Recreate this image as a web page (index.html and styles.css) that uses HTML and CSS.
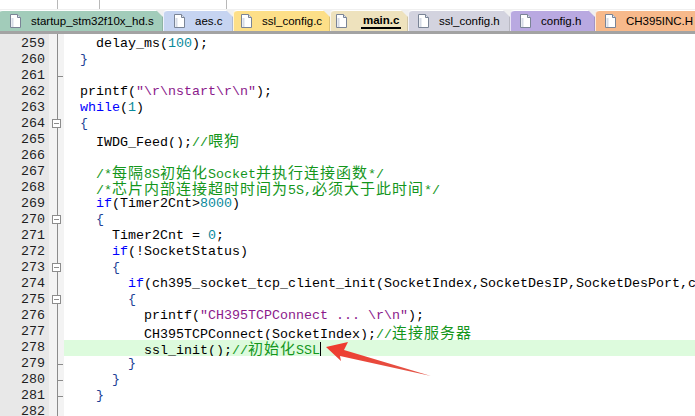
FILE: index.html
```html
<!DOCTYPE html>
<html lang="zh">

<head>
    <meta charset="UTF-8" />
    <title>main.c</title>
    <link rel="stylesheet" href="styles.css">
</head>

<body>
    <div class="ide">
        <div class="toolbar">
            <span class="sep s1"></span>
            <span class="sep s2"></span>
            <span class="sep s3"></span>
        </div>

        <div class="tabs">
            <div class="tab t-startup"><svg class="doc" viewBox="0 0 11 14"><path d="M0.5 0.5H7.5L10.5 3.5V13.5H0.5Z" fill="#fff" stroke="#7a8496"/><path d="M7.5 0.5V3.5H10.5" fill="#dde3ee" stroke="#7a8496"/><rect x="1.5" y="4" width="2" height="9" fill="#d6dbe6"/></svg><span>startup_stm32f10x_hd.s</span></div>
            <div class="tab t-aes"><svg class="doc" viewBox="0 0 11 14"><path d="M0.5 0.5H7.5L10.5 3.5V13.5H0.5Z" fill="#fff" stroke="#7a8496"/><path d="M7.5 0.5V3.5H10.5" fill="#dde3ee" stroke="#7a8496"/><rect x="1.5" y="4" width="2" height="9" fill="#d6dbe6"/></svg><span>aes.c</span></div>
            <div class="tab t-sslc"><svg class="doc" viewBox="0 0 11 14"><path d="M0.5 0.5H7.5L10.5 3.5V13.5H0.5Z" fill="#fff" stroke="#7a8496"/><path d="M7.5 0.5V3.5H10.5" fill="#dde3ee" stroke="#7a8496"/><rect x="1.5" y="4" width="2" height="9" fill="#d6dbe6"/></svg><span>ssl_config.c</span></div>
            <div class="tab t-main aktiv"><svg class="doc" viewBox="0 0 11 14"><path d="M0.5 0.5H7.5L10.5 3.5V13.5H0.5Z" fill="#fff" stroke="#7a8496"/><path d="M7.5 0.5V3.5H10.5" fill="#dde3ee" stroke="#7a8496"/><rect x="1.5" y="4" width="2" height="9" fill="#d6dbe6"/></svg><span>main.c</span></div>
            <div class="tab t-sslh"><svg class="doc" viewBox="0 0 11 14"><path d="M0.5 0.5H7.5L10.5 3.5V13.5H0.5Z" fill="#fff" stroke="#7a8496"/><path d="M7.5 0.5V3.5H10.5" fill="#dde3ee" stroke="#7a8496"/><rect x="1.5" y="4" width="2" height="9" fill="#d6dbe6"/></svg><span>ssl_config.h</span></div>
            <div class="tab t-config"><svg class="doc" viewBox="0 0 11 14"><path d="M0.5 0.5H7.5L10.5 3.5V13.5H0.5Z" fill="#fff" stroke="#7a8496"/><path d="M7.5 0.5V3.5H10.5" fill="#dde3ee" stroke="#7a8496"/><rect x="1.5" y="4" width="2" height="9" fill="#d6dbe6"/></svg><span>config.h</span></div>
            <div class="tab t-ch395"><svg class="doc" viewBox="0 0 11 14"><path d="M0.5 0.5H7.5L10.5 3.5V13.5H0.5Z" fill="#fff" stroke="#7a8496"/><path d="M7.5 0.5V3.5H10.5" fill="#dde3ee" stroke="#7a8496"/><rect x="1.5" y="4" width="2" height="9" fill="#d6dbe6"/></svg><span>CH395INC.H</span></div>
        </div>

        <div class="editor">
            <div class="sor"><span class="szam">259</span><span class="fold"></span><span class="kod">    delay_ms(<span class="num">100</span>);</span></div>
            <div class="sor"><span class="szam">260</span><span class="fold"></span><span class="kod">  <span class="br">}</span></span></div>
            <div class="sor"><span class="szam">261</span><span class="fold veg"></span><span class="kod"></span></div>
            <div class="sor"><span class="szam">262</span><span class="fold"></span><span class="kod">  printf(<span class="str">"\r\nstart\r\n"</span>);</span></div>
            <div class="sor"><span class="szam">263</span><span class="fold"></span><span class="kod">  <span class="kw">while</span>(<span class="num">1</span>)</span></div>
            <div class="sor"><span class="szam">264</span><span class="fold doboz"></span><span class="kod">  <span class="br">{</span></span></div>
            <div class="sor"><span class="szam">265</span><span class="fold"></span><span class="kod">    IWDG_Feed();<span class="cm">//<span class="c">喂狗</span></span></span></div>
            <div class="sor"><span class="szam">266</span><span class="fold"></span><span class="kod"></span></div>
            <div class="sor"><span class="szam">267</span><span class="fold"></span><span class="kod">    <span class="cm">/*<span class="c">每隔</span>8S<span class="c">初始化</span>Socket<span class="c">并执行连接函数</span>*/</span></span></div>
            <div class="sor"><span class="szam">268</span><span class="fold"></span><span class="kod">    <span class="cm">/*<span class="c">芯片内部连接超时时间为</span>5S,<span class="c">必须大于此时间</span>*/</span></span></div>
            <div class="sor"><span class="szam">269</span><span class="fold"></span><span class="kod">    <span class="kw">if</span>(Timer2Cnt&gt;<span class="num">8000</span>)</span></div>
            <div class="sor"><span class="szam">270</span><span class="fold doboz"></span><span class="kod">    <span class="br">{</span></span></div>
            <div class="sor"><span class="szam">271</span><span class="fold"></span><span class="kod">      Timer2Cnt = <span class="num">0</span>;</span></div>
            <div class="sor"><span class="szam">272</span><span class="fold"></span><span class="kod">      <span class="kw">if</span>(!SocketStatus)</span></div>
            <div class="sor"><span class="szam">273</span><span class="fold doboz"></span><span class="kod">      <span class="br">{</span></span></div>
            <div class="sor"><span class="szam">274</span><span class="fold"></span><span class="kod">        <span class="kw">if</span>(ch395_socket_tcp_client_init(SocketIndex,SocketDesIP,SocketDesPort,ch395_tcp_connect)==<span class="num">0</span>)</span></div>
            <div class="sor"><span class="szam">275</span><span class="fold doboz"></span><span class="kod">        <span class="br">{</span></span></div>
            <div class="sor"><span class="szam">276</span><span class="fold"></span><span class="kod">          printf(<span class="str">"CH395TCPConnect ... \r\n"</span>);</span></div>
            <div class="sor"><span class="szam">277</span><span class="fold"></span><span class="kod">          CH395TCPConnect(SocketIndex);<span class="cm">//<span class="c">连接服务器</span></span></span></div>
            <div class="sor aktivSor"><span class="szam">278</span><span class="fold"></span><span class="kod">          ssl_init();<span class="cm">//<span class="c">初始化</span>SSL</span><span class="kurzor"></span></span></div>
            <div class="sor"><span class="szam">279</span><span class="fold veg"></span><span class="kod">        <span class="br">}</span></span></div>
            <div class="sor"><span class="szam">280</span><span class="fold veg"></span><span class="kod">      <span class="br">}</span></span></div>
            <div class="sor"><span class="szam">281</span><span class="fold veg"></span><span class="kod">    <span class="br">}</span></span></div>
            <div class="sor"><span class="szam">282</span><span class="fold"></span><span class="kod"></span></div>

            <svg class="nyil" viewBox="0 0 695 416">
                <defs>
                    <linearGradient id="piros" x1="0" y1="0" x2="1" y2="1">
                        <stop offset="0" stop-color="#f0392c"/>
                        <stop offset="1" stop-color="#e2574a"/>
                    </linearGradient>
                </defs>
                <polygon points="326,347 348,342 344,350 431,376 340,356 341,361" fill="url(#piros)"/>
            </svg>
        </div>
    </div>
</body>

</html>
```

FILE: styles.css
```css
body {
    margin: 0;
    background: #ffffff;
    overflow: hidden;
}

.ide {
    width: 695px;
    height: 416px;
    overflow: hidden;
    position: relative;
}

.toolbar {
    height: 9px;
    background: #ffffff;
    position: relative;
}

.sep {
    position: absolute;
    top: 0;
    width: 1px;
    height: 9px;
    background: #b8b8b8;
}

.s1 { left: 57px; }
.s2 { left: 99px; }
.s3 { left: 226px; }

.tabs {
    display: flex;
    height: 22px;
    background: #f0f0f0;
    border-bottom: 3px solid #a3a3a3;
    font-family: "Liberation Sans", Arial, sans-serif;
    font-size: 11.5px;
    color: #000;
}

.tab {
    display: flex;
    align-items: center;
    height: 21px;
    margin-top: 1px;
    border-radius: 4px 0 0 0;
    border-top: 1px solid #ffffff;
    box-shadow: inset 1px 0 0 rgba(255, 255, 255, 0.7), inset -1px 0 0 rgba(0, 0, 0, 0.12);
    clip-path: polygon(0 0, calc(100% - 7px) 0, 100% 7px, 100% 100%, 0 100%);
    flex-shrink: 0;
}

.doc {
    width: 11px;
    height: 14px;
    margin-right: 10px;
}

.t-startup { width: 165px; background: #a2ccba; padding-left: 12px; margin-left: -2px; box-sizing: border-box; }
.t-aes { width: 70px; background: #c6d4f1; padding-left: 11px; box-sizing: border-box; }
.t-sslc { width: 97px; background: #fddf88; padding-left: 8px; box-sizing: border-box; }
.t-main { width: 78px; background: #eee2bd; padding-left: 6px; box-sizing: border-box; }
.t-sslh { width: 102px; background: #d3d3df; padding-left: 10px; box-sizing: border-box; }
.t-config { width: 85px; background: #b9a9e1; padding-left: 10px; box-sizing: border-box; }
.t-ch395 { width: 110px; background: #f7b98b; padding-left: 10px; box-sizing: border-box; }

.t-main .doc {
    margin-right: 14px;
}

.tab.aktiv span {
    font-weight: bold;
    border-bottom: 2px solid #000;
    line-height: 13px;
    padding: 0 2px;
}

.editor {
    position: relative;
    padding-top: 2px;
    background: linear-gradient(to right, #e8e8e8 0, #e8e8e8 49px, #f3f3f3 49px, #f3f3f3 57px, #8c8c8c 57px, #8c8c8c 58px, #f3f3f3 58px, #f3f3f3 64px, #ffffff 64px) top / 100% 2px no-repeat;
    font-family: "Liberation Mono", "Courier New", monospace;
    font-size: 13.33px;
    color: #000;
}

.sor {
    display: flex;
    height: 16px;
    line-height: 16px;
    white-space: pre;
}

.szam {
    width: 45px;
    padding-right: 4px;
    text-align: right;
    background: #e8e8e8;
    color: #1e1e1e;
    flex-shrink: 0;
}

.fold {
    width: 15px;
    flex-shrink: 0;
    position: relative;
    background: linear-gradient(to right, #f3f3f3 0, #f3f3f3 8px, #8c8c8c 8px, #8c8c8c 9px, #f3f3f3 9px);
}

.fold.veg::after {
    content: "";
    position: absolute;
    left: 8px;
    top: 8px;
    width: 6px;
    height: 1px;
    background: #8c8c8c;
}

.fold.doboz::after {
    content: "";
    position: absolute;
    left: 3px;
    top: 3px;
    width: 9px;
    height: 9px;
    box-sizing: border-box;
    border: 1px solid #8c8c8c;
    background: linear-gradient(#8c8c8c, #8c8c8c) center / 5px 1px no-repeat, #ffffff;
}

.kod {
    flex: 1;
    overflow: hidden;
}

.aktivSor .kod {
    background: #ddfbdd;
}

.kw { color: #0000ff; }
.num { color: #0a8a9c; }
.str { color: #8b1a8b; }
.cm { color: #14961c; }
.br { color: #1c3f96; }

.c {
    font-family: "Noto Sans CJK SC", sans-serif;
    font-size: 15px;
    letter-spacing: 1px;
    line-height: 16px;
}

.kurzor {
    display: inline-block;
    width: 1px;
    height: 15px;
    background: #000;
    vertical-align: -3px;
}

.nyil {
    position: absolute;
    left: 0;
    top: -34px;
    width: 695px;
    height: 416px;
    pointer-events: none;
}
```
